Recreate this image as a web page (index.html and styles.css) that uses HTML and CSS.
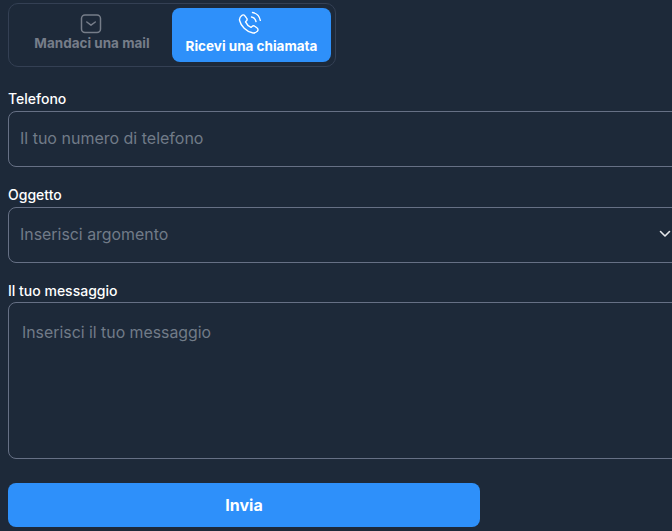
FILE: index.html
```html
<!DOCTYPE html>
<html lang="it">
<head>
  <meta charset="UTF-8">
  <meta name="viewport" content="width=device-width, initial-scale=1.0">
  <title>Contattaci</title>
  <link rel="stylesheet" href="styles.css">
</head>
<body>

  <div class="tabs">
    <button class="tab" type="button">
      <svg class="tab-icon" width="22" height="20" viewBox="0 0 22 20" fill="none" stroke="currentColor" stroke-width="1.5" stroke-linecap="round" stroke-linejoin="round">
        <rect x="0.5" y="1" width="19" height="17.500" rx="3.500"/>
        <path d="M5.800 8l4.200 3.200L14.300 8"/>
      </svg>
      <span>Mandaci una mail</span>
    </button>
    <button class="tab active" type="button">
      <svg class="tab-icon" width="24" height="24" viewBox="2 0 24 24" fill="none" stroke="currentColor" stroke-width="1.4" stroke-linecap="round" stroke-linejoin="round">
        <path d="M3.500 4.800c1.100-1.200 2.500-1.200 3.400 0l1.700 2.300c.7.900.6 1.900-.1 2.700l-1 1.100c1.100 2.400 3 4.300 5.500 5.500l1.100-1c.8-.7 1.800-.8 2.700-.1l2.300 1.700c1.200.9 1.200 2.300 0 3.400-1.200 1.300-2.900 1.900-4.700 1.400C8.200 20.500 2.900 15.100 1.600 9.500 1.200 7.700 2.100 6 3.500 4.800z"/>
        <path d="M13.500 6c2.300.5 4 2.200 4.500 4.500"/>
        <path d="M14.500 1.500c3.800.7 7 3.800 7.800 7.800"/>
      </svg>
      <span>Ricevi una chiamata</span>
    </button>
  </div>

  <form class="contact-form">
    <div class="field">
      <label for="phone">Telefono</label>
      <input id="phone" class="control" type="text" placeholder="Il tuo numero di telefono">
    </div>

    <div class="field">
      <label for="topic">Oggetto</label>
      <div class="control select">
        <span id="topic">Inserisci argomento</span>
        <svg class="chevron" width="12" height="8" viewBox="0 0 12 8" fill="none" stroke="currentColor" stroke-width="1.6" stroke-linecap="round" stroke-linejoin="round">
          <path d="M1.500 1.500L6 6l4.500-4.500"/>
        </svg>
      </div>
    </div>

    <div class="field field-message">
      <label for="message">Il tuo messaggio</label>
      <textarea id="message" class="control message" placeholder="Inserisci il tuo messaggio"></textarea>
    </div>

    <button class="submit" type="button">Invia</button>
  </form>

</body>
</html>
```

FILE: styles.css
```css
html, body {
  overflow: hidden;
}

* {
  box-sizing: border-box;
}

body {
  margin: 0;
  height: 531px;
  padding: 3px 0 0 8px;
  background-color: #1d2939;
  font-family: Inter, "Liberation Sans", sans-serif;
  color: #fff;
}

.tabs {
  display: flex;
  justify-content: space-between;
  width: 328px;
  height: 64px;
  padding: 4px;
  border: 1px solid #344054;
  border-radius: 10px;
}

.tab {
  display: flex;
  flex-direction: column;
  align-items: center;
  width: 159px;
  height: 54px;
  padding: 0;
  background: none;
  border: none;
  border-radius: 8px;
  font-family: inherit;
  font-size: 13.5px;
  line-height: 16px;
  font-weight: 700;
  color: #767d89;
}

.tab-icon {
  overflow: visible;
}

.tab:first-child {
  width: 158px;
  padding-top: 6px;
  gap: 1px;
}

.tab.active {
  padding-top: 3px;
  gap: 3px;
  background-color: #2e90fa;
  color: #fff;
}

.contact-form {
  display: flex;
  flex-direction: column;
  width: 672px;
  margin-top: 23px;
}

.field {
  display: flex;
  flex-direction: column;
  gap: 3px;
  margin-bottom: 19px;
}

.field-message {
  gap: 2px;
  margin-bottom: 15px;
}

label {
  font-size: 14px;
  font-weight: 500;
  line-height: 18px;
  color: #fff;
}

.control {
  width: 672px;
  height: 56px;
  padding: 0 11px 2px;
  background: none;
  border: 1px solid #667085;
  border-radius: 8px;
  font-family: inherit;
  font-size: 16px;
  color: #717b88;
  outline: none;
}

.control::placeholder {
  color: #717b88;
  opacity: 1;
}

.select {
  display: flex;
  align-items: center;
  justify-content: space-between;
  padding-right: 8px;
  font-size: 15.9px;
}

.chevron {
  color: #e5e7eb;
}

.message {
  display: block;
  height: 157px;
  padding: 20px 13px;
  resize: none;
  font-size: 15.85px;
  line-height: 20px;
}

.submit {
  width: 472px;
  height: 44px;
  margin-top: 9px;
  background-color: #2e90fa;
  border: none;
  border-radius: 8px;
  font-family: inherit;
  font-size: 16px;
  font-weight: 700;
  color: #fff;
}
```
